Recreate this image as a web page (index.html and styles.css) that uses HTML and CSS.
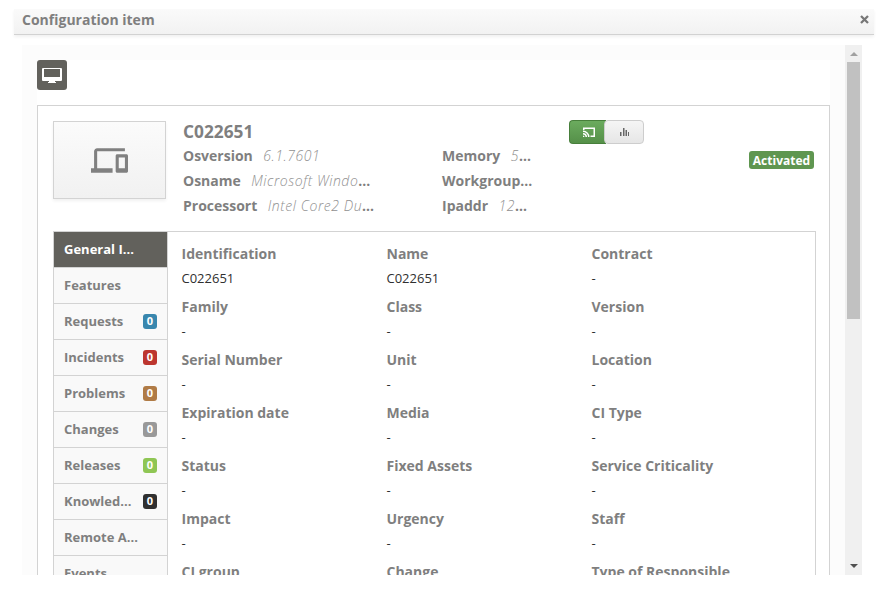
FILE: index.html
```
<!DOCTYPE html>
<html lang="en">
<head>
<meta charset="utf-8">
<title>Configuration item</title>
<link rel="stylesheet" href="styles.css">
</head>
<body>
<div class="dialog">
  <header class="dialog-header">
    <h1>Configuration item</h1>
    <svg class="close" width="9" height="9" viewBox="0 0 9 9"><path d="M1 1l7 7M8 1L1 8" stroke="#777" stroke-width="2.3" fill="none"/></svg>
  </header>
  <div class="viewport">
    <main class="content">
      <div class="toolbar">
        <svg class="monitor" width="20" height="15" viewBox="0 0 20 15"><path fill="#fff" fill-rule="evenodd" d="M1 0h18a1 1 0 0 1 1 1v11a1 1 0 0 1-1 1h-6v1h1v1H6v-1h1v-1H1a1 1 0 0 1-1-1V1a1 1 0 0 1 1-1zm1 1v8h16V1z"/></svg>
      </div>
      <section class="panel">
        <div class="summary">
          <div class="thumb"><svg width="37" height="37" viewBox="0 0 24 24"><path fill="#808080" d="M4 6h18V4H4c-1.100 0-2 .9-2 2v11H0v3h14v-3H4V6zm19 2h-6c-.55 0-1 .45-1 1v10c0 .55.45 1 1 1h6c.55 0 1-.45 1-1V9c0-.55-.45-1-1-1zm-1 9h-4v-7h4v7z"/></svg></div>
          <div class="facts">
            <h2>C022651</h2>
            <div class="fact-grid">
              <p><b>Osversion</b><i>6.1.7601</i></p><p><b>Memory</b><i>5</i><b>...</b></p>
              <p><b>Osname</b><i>Microsoft Windo</i><b>...</b></p><p><b>Workgroup...</b></p>
              <p><b>Processort</b><i>Intel Core2 Du</i><b>...</b></p><p><b>Ipaddr</b><i>12</i><b>...</b></p>
            </div>
          </div>
          <div class="switch">
            <span class="on"><svg width="12" height="11" viewBox="0 0 12 11"><path fill="none" stroke="#fff" stroke-width="1.500" d="M.75 3V1.250h10.500v8H7.500M0 4.250C3.200 4.250 5.750 6.800 5.750 10M0 6.750A3.250 3.250 0 0 1 3.250 10"/><path fill="#fff" d="M0 8.500A1.500 1.500 0 0 1 1.500 10H0z"/></svg></span>
            <span class="off"><svg width="9" height="8" viewBox="0 0 9 8"><path fill="#666" d="M0 4h1.500v4H0zM3 0h1.500v8H3zM5.500 2H7v6H5.500zM8 4h1v4H8z"/></svg></span>
          </div>
          <span class="status">Activated</span>
        </div>
        <div class="details">
          <nav class="tabs">
            <div class="tab active">General I...</div>
            <div class="tab">Features</div>
            <div class="tab">Requests<span class="badge blue">0</span></div>
            <div class="tab">Incidents<span class="badge red">0</span></div>
            <div class="tab">Problems<span class="badge brown">0</span></div>
            <div class="tab">Changes<span class="badge gray">0</span></div>
            <div class="tab">Releases<span class="badge green">0</span></div>
            <div class="tab">Knowled...<span class="badge black">0</span></div>
            <div class="tab">Remote A...</div>
            <div class="tab">Events</div>
          </nav>
          <dl class="fields">
            <div><dt>Identification</dt><dd>C022651</dd></div><div><dt>Name</dt><dd>C022651</dd></div><div><dt>Contract</dt><dd>-</dd></div>
            <div><dt>Family</dt><dd>-</dd></div><div><dt>Class</dt><dd>-</dd></div><div><dt>Version</dt><dd>-</dd></div>
            <div><dt>Serial Number</dt><dd>-</dd></div><div><dt>Unit</dt><dd>-</dd></div><div><dt>Location</dt><dd>-</dd></div>
            <div><dt>Expiration date</dt><dd>-</dd></div><div><dt>Media</dt><dd>-</dd></div><div><dt>CI Type</dt><dd>-</dd></div>
            <div><dt>Status</dt><dd>-</dd></div><div><dt>Fixed Assets</dt><dd>-</dd></div><div><dt>Service Criticality</dt><dd>-</dd></div>
            <div><dt>Impact</dt><dd>-</dd></div><div><dt>Urgency</dt><dd>-</dd></div><div><dt>Staff</dt><dd>-</dd></div>
            <div><dt>CI group</dt></div><div><dt>Change</dt></div><div><dt>Type of Responsible</dt></div>
          </dl>
        </div>
      </section>
    </main>
    <div class="scrollbar">
      <svg width="17" height="17" viewBox="0 0 17 17"><path fill="#a0a0a0" d="M5 11l4-4 4 4z"/></svg>
      <div class="thumb-bar"></div>
      <svg class="down" width="17" height="17" viewBox="0 0 17 17"><path fill="#505050" d="M5 6h8l-4 4z"/></svg>
    </div>
  </div>
</div>
</body>
</html>
```
FILE: styles.css
```
* { box-sizing: border-box; margin: 0; padding: 0; }
body { background: #fff; color: #7f7f7f; font: 14px/20px "Open Sans", sans-serif; overflow: hidden; }
svg { display: block; flex: none; }
.dialog { width: 860px; margin: 9px 0 0 14px; }
.dialog-header { height: 26px; display: flex; align-items: center; justify-content: space-between; padding: 0 5px 3px 8px; background: linear-gradient(#fafafa, #f2f2f2); border-bottom: 1px solid #d2d2d2; box-shadow: 0 2px 3px rgba(0,0,0,.06); }
.close { margin-top: -2px; }
h1 { font-size: 14px; font-weight: 700; line-height: 20px; }
.viewport { display: flex; width: 840px; height: 530px; margin: 10px 0 0 8px; overflow: hidden; background: #fcfcfc; }
.content { flex: 1; margin: 15px 15px 0; background: #fff; min-width: 0; }
.toolbar { width: 30px; height: 30px; border-radius: 3px; background: #62615c; display: flex; align-items: center; justify-content: center; }
.panel { margin-top: 15px; height: 700px; border: 1px solid #d3d3d3; padding: 15px 13px 0 15px; }
.summary { display: flex; height: 110px; align-items: flex-start; }
.thumb { width: 113px; height: 78px; border: 1px solid #d3d3d3; background: linear-gradient(#fbfbfb, #f1f1f1); box-shadow: 0 2px 3px rgba(0,0,0,.06); display: flex; align-items: center; justify-content: center; flex: none; }
.facts { width: 386px; margin-left: 17px; flex: none; }
h2 { font-size: 17.300px; font-weight: 700; line-height: 21px; height: 22px; }
.fact-grid { display: grid; grid-template-columns: 259px 1fr; grid-auto-rows: 25px; }
.fact-grid p { line-height: 25px; white-space: nowrap; }
.fact-grid b { font-weight: 700; }
.fact-grid i { margin-left: 10.500px; font-weight: 300; letter-spacing: .55px; color: #909090; }
.switch { display: flex; width: 75px; height: 24px; margin-top: -1px; flex: none; }
.switch span { display: flex; align-items: center; justify-content: center; border: 1px solid; }
.on { width: 37px; padding-left: 2px; margin-right: -2px; border-color: #477f3b !important; border-right: 0 !important; border-radius: 4px 0 0 4px; background: linear-gradient(#6bab5e, #559049); }
.off { width: 40px; border-color: #cdcdcd !important; border-radius: 4px; background: linear-gradient(#f5f5f5, #e6e6e6); }
.status { margin: 30px 2px 0 auto; height: 18px; width: 65px; border-radius: 3px; background: #5f9650; color: #fff; font-size: 12px; font-weight: 700; line-height: 19px; text-align: center; }
.details { display: flex; height: 600px; border: 1px solid #d3d3d3; }
.tabs { width: 114px; flex: none; border-right: 1px solid #d3d3d3; background: #f9f9f9; }
.tab { height: 36px; display: flex; align-items: center; justify-content: space-between; padding: 0 10px 1px; border-bottom: 1px solid #d3d3d3; font-size: 13px; line-height: 18px; font-weight: 700; }
.active { background: #62615c; color: #fff; }
.badge { width: 14px; height: 15px; margin-top: 1px; border-radius: 3px; color: #fff; font-size: 11px; font-weight: 700; line-height: 14px; text-align: center; }
.blue { background: #3987ae; }
.red { background: #bd362f; }
.brown { background: #b07b46; }
.gray { background: #999; }
.green { background: #8fc654; }
.black { background: #303030; }
.fields { flex: 1; display: grid; grid-template-columns: 205px 205px 1fr; grid-auto-rows: 53px; padding: 11px 0 0 13.500px; }
dt { font-weight: 700; line-height: 22px; height: 24px; }
dd { color: #303030; font-size: 13px; line-height: 22px; }
.scrollbar { width: 17px; flex: none; display: flex; flex-direction: column; background: #f0f0f0; }
.thumb-bar { width: 13px; height: 257px; margin-left: 2px; background: #c1c1c1; }
.down { margin-top: auto; }
```
